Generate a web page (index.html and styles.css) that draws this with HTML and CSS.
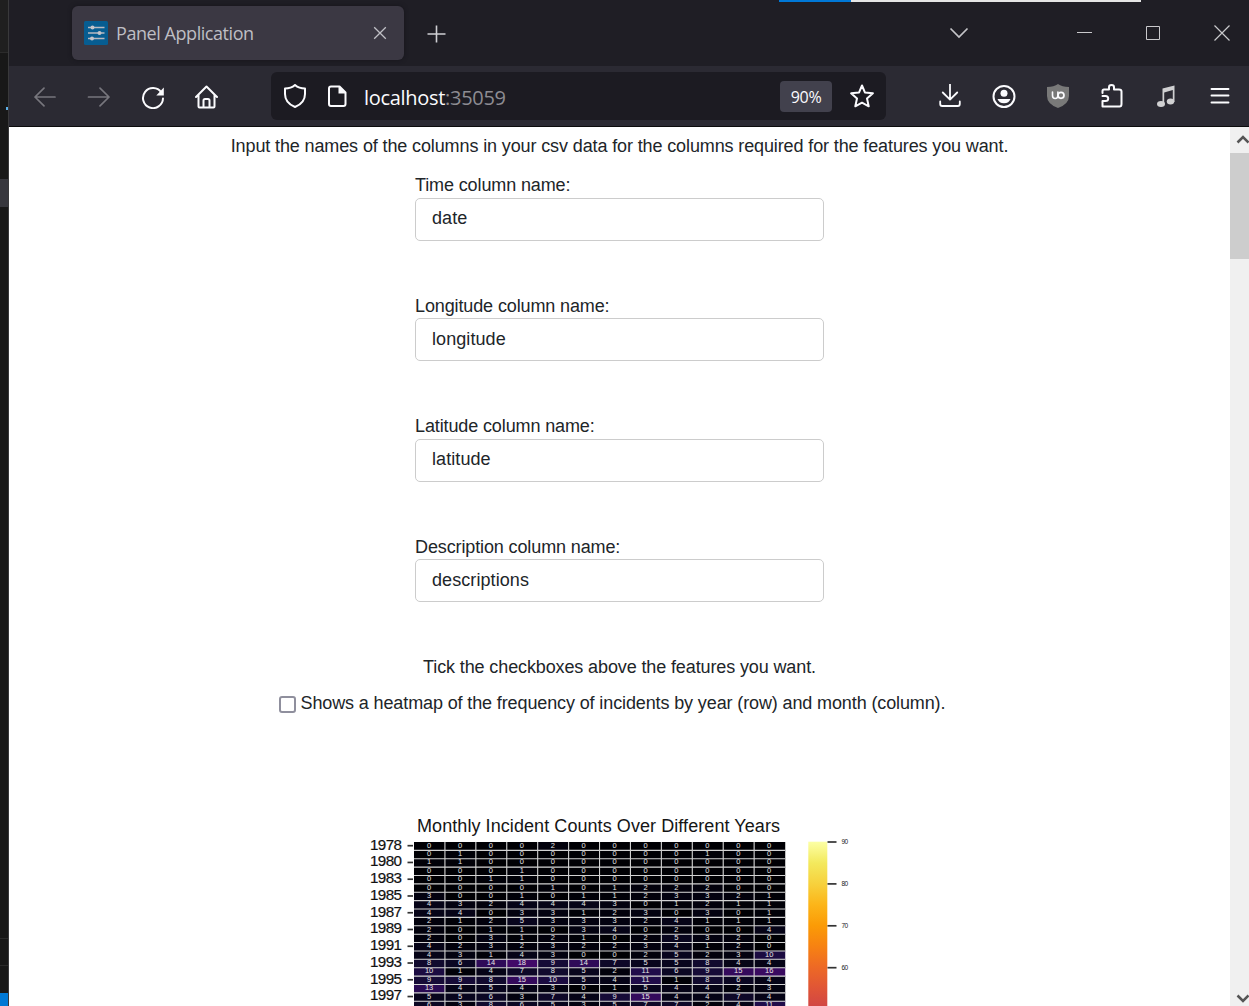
FILE: index.html
```html
<!DOCTYPE html>
<html lang="en">
<head>
<meta charset="utf-8">
<title>Panel Application</title>
<link rel="stylesheet" href="styles.css">
</head>
<body>
<aside class="editor-edge"><div class="edge-top"></div><div class="edge-side"></div><div class="edge-active"></div><div class="edge-body"></div><div class="edge-row"></div><div class="edge-row last"></div><div class="edge-status"></div></aside>
<div class="browser">
  <div class="share-bar"></div>
  <header class="tabs">
    <div class="tab">
      <svg class="favicon" width="24" height="24" viewBox="0 0 24 24"><rect width="24" height="24" rx="1.5" fill="#075d91"/><path d="M4 6.500h16.500M4 12h16.500M4 17.500h16.500" stroke="#b9b9c0" stroke-width="1.700"/><g fill="#c4c4ca"><circle cx="8.500" cy="6.500" r="2"/><circle cx="15.500" cy="12" r="2"/><circle cx="8" cy="17.500" r="2"/></g></svg>
      <span class="tab-title">Panel Application</span>
      <svg width="14" height="14" viewBox="0 0 14 14"><path d="M1.200 1.200l11.600 11.600M12.800 1.200L1.200 12.800" stroke="#c0c0c6" stroke-width="1.300"/></svg>
    </div>
    <svg class="new-tab" width="18" height="18" viewBox="0 0 18 18"><path d="M9.500 .5v17M.5 9h18" stroke="#cfcfd4" stroke-width="1.600"/></svg>
    <svg class="chevron" width="20" height="12" viewBox="0 0 20 12"><path d="M1.500 1.500l8.500 8.500 8.500-8.500" fill="none" stroke="#c4c4c8" stroke-width="1.700"/></svg>
    <svg class="minimize" width="15" height="15" viewBox="0 0 15 15"><path d="M0 6.500h15" stroke="#c9c9cc"/></svg>
    <svg class="maximize" width="14" height="14" viewBox="0 0 14 14"><path d="M.5.5h13v13H.5z" fill="none" stroke="#c9c9cc"/></svg>
    <svg class="close" width="16" height="16" viewBox="0 0 16 16"><path d="M.5.5l15 15M15.500.5l-15 15" stroke="#c9c9cc" stroke-width="1.200"/></svg>
  </header>
  <nav class="toolbar">
    <div class="nav-icons">
      <svg class="icon dim" viewBox="0 0 24 24"><path d="M22 12H2M11 3.200L2 12l9 8.800"/></svg>
      <svg class="icon dim" viewBox="0 0 24 24"><path d="M1.500 12h20.500M13 3.200L22 12l-9 8.800"/></svg>
      <svg class="icon" viewBox="0 0 24 24"><path d="M20.300 7.500A10 10 0 1 0 22 13.500"/><path class="solid" d="M22.800 2.500v8h-7.500z"/></svg>
      <svg class="icon" viewBox="0 0 24 24"><path d="M1 12L11.500 1.500 22 12M3.500 10v11.500q0 1 1 1h14q1 0 1-1V10M8.500 22.500v-7q0-1.500 1.500-1.500h3q1.500 0 1.500 1.500v7"/></svg>
    </div>
    <div class="address">
      <svg class="icon" viewBox="0 0 24 24"><path d="M12 1q4 3.500 10 3.500V10q0 9-10 13Q2 19 2 10V4.500Q8 4.500 12 1z"/></svg>
      <svg class="icon page-icon" viewBox="0 0 24 24"><path d="M6 2.500h8.500l6 6v11.500q0 2-2 2H6q-2 0-2-2v-15.500q0-2 2-2z"/><path class="solid" d="M13.500 2v7.500h7.500z"/></svg>
      <span class="url">localhost<span class="port">:35059</span></span>
      <span class="zoom-level">90%</span>
      <svg class="icon star" viewBox="0 0 24 24"><path d="M12 1.500l2.900 6.900 8 .9-5.900 5.200 1.700 7.800L12 18.700l-6.700 3.600L7 14.500 1.100 9.300l8-.9z"/></svg>
    </div>
    <div class="extension-icons">
      <svg class="icon light" viewBox="0 0 24 24"><path d="M12 0v15.500M4.800 8.500L12 15.700l7.200-7.200M2.200 17.500v2.500q0 2 2 2h15.600q2 0 2-2v-2.500"/></svg>
      <svg class="icon" viewBox="0 0 24 24"><circle cx="12" cy="12.500" r="10.500"/><circle class="solid" cx="12" cy="9.300" r="3.500"/><path class="solid" d="M5.500 15h13q-1.500 4.200-6.500 4.200T5.500 15z"/></svg>
      <svg class="icon" viewBox="0 0 24 24"><path d="M12 0q4 3 11 3v9q0 8-11 12Q1 20 1 12V3q7 0 11-3z" style="fill:#797979;stroke:none"/><path d="M6.500 8v3.500q0 3 2.700 3t2.700-3v-3.500" stroke-width="1.600"/><circle cx="15" cy="11.300" r="3" stroke-width="1.700"/></svg>
      <svg class="icon" viewBox="0 0 24 24"><path d="M2.500 9V7q0-1.500 1.500-1.500h5V3.300q0-2.300 2.500-2.300T14 3.300v2.200h5q2.500 0 2.500 2v12.500q0 2.500-2 2.500h-17V17h3q2.700 0 2.700-2.500T5.500 12h-3"/></svg>
      <svg class="icon low" viewBox="0 0 24 24"><g style="fill:#d0d0d2;stroke:none"><ellipse cx="7" cy="19" rx="4" ry="3"/><ellipse cx="16.500" cy="16.500" rx="3.700" ry="3"/><path d="M8.500 3.500L20.500.5v16.500h-1.700V5L10.200 7.500v11.500H8.500z"/></g></svg>
      <svg class="icon" viewBox="0 0 24 24"><path d="M3.500 5h17M3.500 11.500h17M3.500 18.500h17" stroke-width="1.900"/></svg>
    </div>
  </nav>
  <div class="viewport">
    <main class="page">
      <p class="intro">Input the names of the columns in your csv data for the columns required for the features you want.</p>
      <form class="fields">
        <label class="field">Time column name:<input type="text" value="date"></label>
        <label class="field">Longitude column name:<input type="text" value="longitude"></label>
        <label class="field">Latitude column name:<input type="text" value="latitude"></label>
        <label class="field">Description column name:<input type="text" value="descriptions"></label>
      </form>
      <p class="hint">Tick the checkboxes above the features you want.</p>
      <div class="option"><span class="checkbox" role="checkbox" aria-checked="false"></span><span>Shows a heatmap of the frequency of incidents by year (row) and month (column).</span></div>
      <svg class="heatmap" id="heatmap" width="500" height="196" viewBox="360 810 500 196">
        <defs><linearGradient id="inferno" gradientUnits="userSpaceOnUse" x1="0" y1="842" x2="0" y2="1009">
          <stop offset="0" stop-color="#fcffa4"/><stop offset=".125" stop-color="#f3e95d"/><stop offset=".25" stop-color="#f7d13d"/><stop offset=".375" stop-color="#fcb519"/><stop offset=".5" stop-color="#fb9b06"/><stop offset=".625" stop-color="#f78212"/><stop offset=".75" stop-color="#ed6925"/><stop offset=".875" stop-color="#e05536"/><stop offset="1" stop-color="#cf4446"/>
        </linearGradient></defs>
        <text class="chart-title" x="417" y="832" textLength="363">Monthly Incident Counts Over Different Years</text>
        <rect x="808.300" y="841.700" width="19" height="170" fill="url(#inferno)"/>
      </svg>
    </main>
    <div class="scrollbar">
      <svg width="19" height="26" viewBox="0 0 19 26"><path d="M7.500 15.500l5.500-5.500 5.500 5.500" fill="none" stroke="#555" stroke-width="2.500"/></svg>
      <div class="thumb"></div>
      <svg class="scroll-down" width="19" height="18" viewBox="0 0 19 18"><path d="M7.500 7.500l5.500 5.500L18.500 7.500" fill="none" stroke="#555" stroke-width="2.500"/></svg>
    </div>
  </div>
</div>
<script src="heatmap.js"></script>
</body>
</html>
```
FILE: styles.css
```css
* { box-sizing: border-box; }
body { margin: 0; width: 1249px; height: 1006px; overflow: hidden; display: flex; font-family: "Liberation Sans", Arial, sans-serif; font-size: 18px; color: #212529; }
.editor-edge { width: 9px; display: flex; flex-direction: column; background: #181818; border-right: 1px solid #39393b; }
.edge-top { height: 53px; background: #1f1f1f; border-bottom: 1px solid #2b2b2b; }
.edge-side { height: 126px; background: linear-gradient(#5db0e8, #5db0e8) 6px 54px / 2px 3px no-repeat; }
.edge-active { height: 28px; background: #37373d; }
.edge-body { height: 731px; }
.edge-row { height: 27px; border-top: 1px solid #2b2b2b; }
.edge-row.last { height: 28px; }
.edge-status { flex: 1; background: #0078d4; }
.browser { flex: 1; display: flex; flex-direction: column; position: relative; }
.share-bar { position: absolute; left: 770px; top: 0; width: 362px; height: 2px; background: linear-gradient(90deg, #0078d7 72px, #e5e5e5 72px); }
.tabs { height: 66px; background: #1f1e25; padding-left: 63px; display: flex; align-items: center; }
.tab { width: 332px; height: 54px; border-radius: 6px; background: #3b3843; box-shadow: 0 0 4px #16151b; padding: 0 17px 0 12px; display: flex; align-items: center; }
.tab-title { flex: 1; margin-left: 8px; font-family: "Open Sans", sans-serif; font-size: 18px; letter-spacing: -.44px; color: #bebec4; white-space: nowrap; }
.new-tab { margin-left: 23px; margin-top: 2px; overflow: visible; }
.chevron { margin-left: 504px; }
.minimize { margin-left: 108px; }
.maximize { margin-left: 54px; }
.close { margin-left: 54px; }
.toolbar { height: 61px; background: #2b2a33; border-bottom: 1px solid #0c0c0d; display: flex; align-items: center; }
.nav-icons { width: 262px; padding: 1px 0 0 24px; display: flex; gap: 30px; }
.icon { width: 24px; height: 24px; flex: none; fill: none; stroke: #fbfbfe; stroke-width: 2; stroke-linecap: round; stroke-linejoin: round; }
.icon .solid { fill: #fbfbfe; stroke: none; }
.icon.dim { stroke: #77767d; stroke-width: 1.700; }
.icon.light { stroke-width: 1.800; }
.icon.low { margin-top: 1px; }
.address { width: 615px; height: 48px; border-radius: 6px; background: #1c1b22; display: flex; align-items: center; padding: 0 12px; }
.page-icon { margin-left: 18px; }
.url { flex: 1; margin: 2px 0 0 15px; font: 20px "Open Sans", sans-serif; letter-spacing: -.3px; color: #fbfbfe; }
.port { color: #8d8c92; }
.zoom-level { width: 52px; height: 31px; line-height: 32px; border-radius: 4px; background: #42414d; text-align: center; font-family: "Open Sans", sans-serif; font-size: 16px; letter-spacing: -.3px; color: #fbfbfe; }
.star { margin-left: 18px; }
.extension-icons { flex: 1; padding-left: 52px; display: flex; gap: 30px; }
.viewport { height: 879px; display: flex; background: #fff; }
.page { width: 1221px; display: flex; flex-direction: column; align-items: center; overflow: hidden; letter-spacing: -.12px; }
.intro, .hint { margin: 0; line-height: 22px; white-space: nowrap; }
.intro { margin-top: 8px; }
.fields { margin-top: 17px; width: 409px; display: flex; flex-direction: column; }
.field { height: 120.500px; line-height: 23px; }
.field input { display: block; width: 409px; height: 43px; margin: .800px 0 0; padding: 0 16px 1px; border: 1px solid #ccc; border-radius: 5px; background: #fff; color: #212529; font: 18px "Liberation Sans", Arial, sans-serif; letter-spacing: .08px; }
.option { width: 681px; height: 22px; line-height: 22px; margin-top: 14px; display: flex; gap: 4.500px; white-space: nowrap; }
.checkbox { width: 17px; height: 17px; margin-top: 4px; border: 2px solid #8f8f9d; border-radius: 3px; background: #fff; flex: none; }
.heatmap { flex: none; margin-top: 96px; align-self: flex-start; margin-left: 351px; font-family: "Liberation Sans", Arial, sans-serif; letter-spacing: 0; }
.chart-title { font-size: 18px; fill: #151515; }
.year { font-size: 15.200px; fill: #111; stroke: #111; stroke-width: .2px; text-anchor: end; }
.count { font-size: 7.500px; fill: #e4e4e4; text-anchor: middle; }
.scale { font-size: 6.500px; fill: #222; }
.tick { stroke: #333; stroke-width: 1.700; }
.grid-line { stroke: #d2d2d2; stroke-width: 1.100; }
.scrollbar { width: 19px; display: flex; flex-direction: column; background: #f0f0f0; }
.thumb { height: 106px; background: #cdcdcd; }
.scroll-down { margin-top: auto; }
```
FILE: heatmap.js
```js
const rows = [
  [0,0,0,0,2,0,0,0,0,0,0,0],
  [0,1,0,0,0,0,0,0,0,1,0,0],
  [1,1,0,0,0,0,0,0,0,0,0,0],
  [0,0,0,1,0,0,0,0,0,0,0,0],
  [0,0,1,1,0,0,0,0,0,0,0,0],
  [0,0,0,0,1,0,1,2,2,2,0,0],
  [3,0,0,1,0,1,1,2,3,3,2,1],
  [4,3,2,4,4,4,3,0,1,2,1,1],
  [4,4,0,3,3,1,2,3,0,3,0,1],
  [2,1,2,5,3,3,3,2,4,1,1,1],
  [2,0,1,1,0,3,4,0,2,0,0,4],
  [2,0,3,1,2,1,0,2,5,3,2,0],
  [4,2,3,2,3,2,2,3,4,1,2,0],
  [4,3,1,4,3,0,0,2,5,2,3,10],
  [8,6,14,18,9,14,7,5,5,8,4,4],
  [10,1,4,7,8,5,2,11,6,9,15,16],
  [9,9,8,15,10,5,4,11,1,8,6,4],
  [13,4,5,4,3,0,1,5,4,4,2,3],
  [5,5,6,3,7,4,9,15,4,4,7,4],
  [6,3,8,6,5,3,5,7,7,2,4,11]
];
const years = [1978, 1980, 1983, 1985, 1987, 1989, 1991, 1993, 1995, 1997, 1999];
const stops = [[0,0,0,4],[3,3,2,16],[5,8,5,29],[8,17,10,46],[11,32,12,74],[15,52,10,92],[18,66,10,104]];
const left = 414, top0 = 842, cellW = 30.92, cellH = 8.38;
const chart = document.getElementById('heatmap');

function add(tag, attrs, text) {
  const el = document.createElementNS('http://www.w3.org/2000/svg', tag);
  for (const key in attrs) el.setAttribute(key, attrs[key]);
  if (text !== undefined) el.textContent = text;
  chart.appendChild(el);
}

function color(v) {
  let i = 1;
  while (stops[i][0] < v) i++;
  const a = stops[i - 1], b = stops[i], t = (v - a[0]) / (b[0] - a[0]);
  return 'rgb(' + [1, 2, 3].map(k => Math.round(a[k] + (b[k] - a[k]) * t)).join(',') + ')';
}

rows.forEach((row, r) => row.forEach((v, c) => {
  add('rect', { x: left + c * cellW, y: top0 + r * cellH, width: cellW + .2, height: cellH + .2, fill: color(v) });
}));
for (let r = 1; r < rows.length; r++) {
  const y = top0 + r * cellH;
  add('line', { class: 'grid-line', x1: left, x2: 785, y1: y, y2: y });
}
for (let c = 1; c < 12; c++) {
  const x = left + c * cellW;
  add('line', { class: 'grid-line', x1: x, x2: x, y1: top0, y2: 1006 });
}
rows.forEach((row, r) => row.forEach((v, c) => {
  add('text', { class: 'count', x: left + (c + .5) * cellW - .4, y: top0 + r * cellH + 5.7 }, v);
}));
years.forEach((year, i) => {
  const y = 845.4 + i * 16.76;
  add('text', { class: 'year', x: 402, y: y + 4.2, textLength: 32 }, year);
  add('line', { class: 'tick', x1: 407.5, x2: 413, y1: y + .3, y2: y + .3 });
});
[90, 80, 70, 60].forEach((value, i) => {
  const y = 842 + i * 41.9;
  add('line', { class: 'tick', x1: 827.5, x2: 836.5, y1: y, y2: y });
  add('text', { class: 'scale', x: 841.5, y: y + 2.3, textLength: 6.5 }, value);
});
```
